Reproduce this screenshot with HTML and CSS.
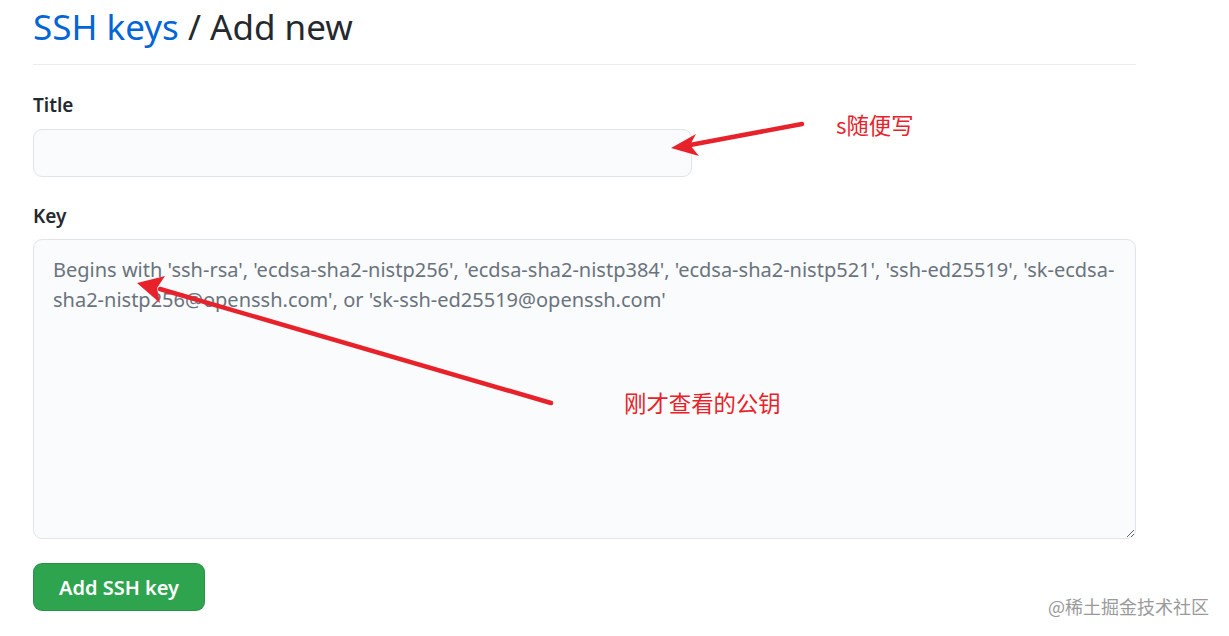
FILE: index.html
```html
<!DOCTYPE html>
<html>
<head>
<meta charset="utf-8">
<link rel="stylesheet" href="styles.css">
</head>
<body>
<div class="page">
  <h2 class="subhead"><a class="crumb" href="#">SSH keys</a> / Add new</h2>
  <form class="form">
    <div class="group">
      <label class="label">Title</label>
      <input class="input" type="text">
    </div>
    <div class="group">
      <label class="label">Key</label>
      <textarea class="textarea" placeholder="Begins with 'ssh-rsa', 'ecdsa-sha2-nistp256', 'ecdsa-sha2-nistp384', 'ecdsa-sha2-nistp521', 'ssh-ed25519', 'sk-ecdsa-sha2-nistp256@openssh.com', or 'sk-ssh-ed25519@openssh.com'"></textarea>
    </div>
    <button class="btn" type="button">Add SSH key</button>
  </form>
</div>
<svg class="annot" width="1229" height="636" viewBox="0 0 1229 636">
  <g stroke="#e8222a" stroke-width="4.5" stroke-linecap="round" fill="#e8222a">
    <line x1="802" y1="124" x2="690" y2="145"/>
    <line x1="551" y1="403" x2="160" y2="289"/>
  </g>
  <g fill="#e8222a">
    <polygon points="671,148 696,134 690,145 699,156"/>
    <polygon points="137,283 165,276 157,288 160,303"/>
  </g>
  <text class="note" x="836" y="134">s随便写</text>
  <text class="note" x="624" y="412">刚才查看的公钥</text>
</svg>
<div class="watermark">@稀土掘金技术社区</div>
</body>
</html>
```
FILE: styles.css
```css
html, body {
  margin: 0;
  padding: 0;
  background: #fff;
}
body {
  font-family: "Noto Sans", "Open Sans", "Liberation Sans", "Noto Sans CJK SC", sans-serif;
  color: #24292e;
  width: 1229px;
  height: 636px;
  overflow: hidden;
  position: relative;
}
.page {
  padding-left: 33px;
  width: 1103px;
}
.subhead {
  margin: 0;
  font-weight: 400;
  font-size: 35px;
  line-height: 54px;
  padding-bottom: 10px;
  border-bottom: 1px solid #eaecef;
  color: #24292e;
}
.crumb {
  color: #0366d6;
  text-decoration: none;
}
.form {
  display: flex;
  flex-direction: column;
  padding-top: 25px;
}
.group {
  display: flex;
  flex-direction: column;
  margin-bottom: 24px;
}
.label {
  font-size: 19px;
  font-weight: 600;
  line-height: 30px;
  margin-bottom: 9px;
}
.group + .group .label {
  margin-bottom: 8px;
}
.input {
  width: 659px;
  height: 48px;
  box-sizing: border-box;
  border: 1px solid #e1e4e8;
  border-radius: 9px;
  background: #fafbfc;
  font-size: 20px;
  padding: 0 18px;
  outline: none;
}
.textarea {
  width: 1103px;
  height: 300px;
  box-sizing: border-box;
  border: 1px solid #e1e4e8;
  border-radius: 9px;
  background: #fafbfc;
  font-family: "Noto Sans", "Open Sans", "Liberation Sans", sans-serif;
  font-size: 20px;
  line-height: 30px;
  padding: 15px 19px;
  color: #24292e;
  resize: vertical;
  outline: none;
}
.textarea::placeholder {
  color: #6a737d;
}
.btn {
  align-self: flex-start;
  width: 172px;
  height: 48px;
  border: 1px solid rgba(27,31,35,0.15);
  border-radius: 9px;
  background: #2ea44f;
  color: #fff;
  font-family: "Noto Sans", "Open Sans", sans-serif;
  font-size: 20px;
  font-weight: 600;
  cursor: pointer;
}
.annot {
  position: absolute;
  left: 0;
  top: 0;
  pointer-events: none;
}
.note {
  font-family: "Noto Sans CJK SC", "Noto Sans", sans-serif;
  font-size: 22.4px;
  fill: #e8222a;
}
.watermark {
  position: absolute;
  left: 1048px;
  top: 594px;
  font-family: "Noto Sans CJK SC", sans-serif;
  font-size: 18px;
  line-height: 24px;
  color: #9a9a9a;
}
```
